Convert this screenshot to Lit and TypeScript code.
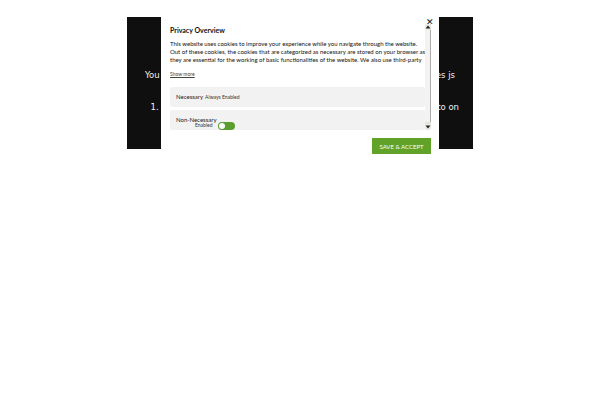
import { LitElement, html, css } from "lit";
import { customElement } from "lit/decorators.js";

@customElement("app-root")
export class AppRoot extends LitElement {
  static styles = css`
    :host { display: block; width: 600px; height: 400px; background: #fff; position: relative; overflow: hidden; font-family: "Lato", sans-serif; }
    .wrap { padding: 17px 127px 0; }
    .panel { height: 132px; background: #0f0f0f; color: #f2f2f2; font-family: "DejaVu Sans", sans-serif; font-size: 8.5px; box-sizing: border-box; padding-top: 52.5px; overflow: hidden; }
    .l { display: flex; justify-content: space-between; line-height: 10px; white-space: nowrap; }
    .l1 { padding: 0 18px; }
    .l2 { padding: 22px 14px 0 23.5px; }
    .modal { position: absolute; left: 161px; top: 17px; width: 278px; height: 143px; background: #fff; box-sizing: border-box; padding: 8px 8px 0 9px; color: #111; }
    .close { position: absolute; left: 265px; top: 0; font-size: 9px; line-height: 10px; font-family: "DejaVu Sans", sans-serif; color: #111; }
    .scroll { width: 255px; height: 105px; overflow: hidden; }
    h2 { margin: 0; font-size: 7px; line-height: 11px; font-weight: 700; color: #111; height: 15px; }
    p { margin: 0; font-size: 6px; line-height: 7.8px; color: #111; height: 24px; overflow: hidden; white-space: nowrap; }
    .more { font-size: 5px; line-height: 7px; color: #444; text-decoration: underline; margin-top: 7px; height: 14px; }
    .row { background: #f2f2f2; border-radius: 2px; margin-top: 2px; padding: 0 6px; height: 20px; display: flex; align-items: baseline; line-height: 20px; font-size: 6px; color: #222; gap: 2px; white-space: nowrap; }
    .row small { font-size: 5px; color: #333; }
    .row2 { height: 20px; position: relative; display: block; margin-top: 3px; }
    .row2 span { position: absolute; white-space: nowrap; }
    .nn { left: 6px; top: 6px; line-height: 7px; }
    .en { left: 25px; top: 12px; font-size: 5px; line-height: 7px; color: #333; }
    .toggle { position: absolute; left: 48px; top: 12px; width: 17px; height: 8px; border-radius: 4px; background: #5a9e2f; }
    .toggle::before { content: ""; position: absolute; left: 1px; top: 1px; width: 6px; height: 6px; border-radius: 50%; background: #fff; }
    .bar { position: absolute; left: 264px; top: 7px; width: 6px; height: 106px; background: #e4e2de; display: flex; flex-direction: column; justify-content: space-between; }
    .arr { height: 6px; background: #ecebe8; position: relative; }
    .arr svg { display: block; }
    .thumb { position: absolute; left: 0; top: 6px; width: 5px; height: 92px; background: #f4f3f1; border-right: 1px solid #aaa; }
    .foot { position: absolute; right: 8px; top: 121px; }
    button { border: 0; background: #61a229; color: #fff; font: 400 6px "Lato", sans-serif; width: 59px; height: 16px; padding: 0; display: block; }
  `;
  render() {
    return html`
      <div class="wrap">
        <div class="panel">
          <div class="l l1"><span>You h</span><span>es js</span></div>
          <div class="l l2"><span>1. S</span><span>to on</span></div>
        </div>
      </div>
      <div class="modal">
        <div class="close">✕</div>
        <div class="scroll">
          <h2>Privacy Overview</h2>
          <p>This website uses cookies to improve your experience while you navigate through the website.<br />Out of these cookies, the cookies that are categorized as necessary are stored on your browser as<br />they are essential for the working of basic functionalities of the website. We also use third-party</p>
          <div class="more">Show more</div>
          <div class="row"><span>Necessary</span><small>Always Enabled</small></div>
          <div class="row row2">
            <span class="nn">Non-Necessary</span>
            <span class="en">Enabled</span>
            <span class="toggle"></span>
          </div>
        </div>
        <div class="bar">
          <div class="thumb"></div>
          <div class="arr"><svg width="6" height="6" viewBox="0 0 6 6"><path d="M.5 4.5h5L3 1.5z" fill="#222"/></svg></div>
          <div class="arr"><svg width="6" height="6" viewBox="0 0 6 6"><path d="M.5 1.5h5L3 4.5z" fill="#222"/></svg></div>
        </div>
        <div class="foot"><button>SAVE &amp; ACCEPT</button></div>
      </div>
    `;
  }
}
